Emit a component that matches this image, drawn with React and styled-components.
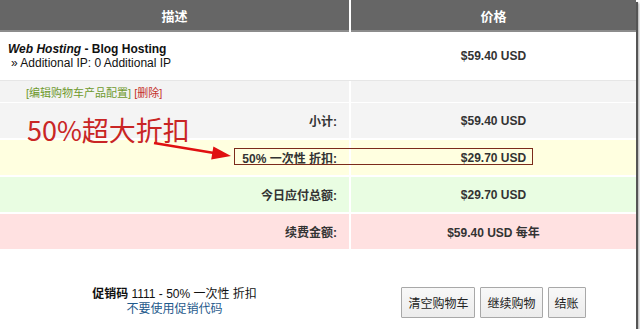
import React from "react";
import styled, { createGlobalStyle } from "styled-components";

const GlobalStyle = createGlobalStyle`
  body {
    margin: 0;
    background: #fff;
    font-family: "Liberation Sans", "Noto Sans CJK SC", sans-serif;
    color: #333;
  }
`;

// 截图外框, 右下有阴影
const Frame = styled.div`
  position: relative;
  width: 636px;
  height: 329px;
  background: #fff;
  box-shadow: 2px 2px 0 #555, 3px 3px 2px rgba(0, 0, 0, 0.35);
  overflow: visible;
`;

const Table = styled.div`
  display: flex;
  flex-direction: column;
`;

const Row = styled.div`
  display: grid;
  grid-template-columns: 349px 1fr;
  column-gap: 2px;
  height: ${(p) => p.$h}px;
  margin-top: ${(p) => p.$mt || 0}px;
  border-bottom: ${(p) => (p.$line ? "1px solid #e6e6e6" : "none")};
`;

const HeadCell = styled.div`
  background: #666;
  border-bottom: 2px solid #8c8c8c;
  color: #fff;
  font-weight: bold;
  font-size: 13px;
  display: flex;
  align-items: center;
  justify-content: center;
`;

const Cell = styled.div`
  background: ${(p) => p.$bg || "#fff"};
  display: flex;
  align-items: center;
  justify-content: ${(p) => p.$align || "center"};
  padding: ${(p) => p.$pad || "0"};
  font-size: 12px;
  font-weight: ${(p) => (p.$bold ? "bold" : "normal")};
  color: #333;
`;

const Product = styled.div`
  display: flex;
  flex-direction: column;
  line-height: 14px;
  color: #111;
`;

const ProductName = styled.div`
  font-weight: bold;
  em {
    font-style: italic;
  }
`;

const Addon = styled.div`
  padding-left: 3px;
`;

const EditLink = styled.span`
  font-size: 11px;
  color: ${(p) => p.$color};
  margin-right: 3px;
`;

const Footer = styled.div`
  display: grid;
  grid-template-columns: 349px 1fr;
  column-gap: 2px;
  padding-top: 38px;
`;

const Promo = styled.div`
  display: flex;
  flex-direction: column;
  align-items: center;
  font-size: 12px;
  line-height: 15px;
  color: #111;
  b {
    font-weight: bold;
  }
`;

const PromoLink = styled.a`
  color: #1f5a8c;
  text-decoration: none;
`;

const Buttons = styled.div`
  display: flex;
  justify-content: center;
  gap: 5px;
`;

const Button = styled.button`
  height: 31px;
  padding: 0 6px;
  font-family: "Noto Sans CJK SC", sans-serif;
  font-size: 12px;
  color: #222;
  background: linear-gradient(#f8f8f8, #ececec);
  border: 1px solid #a8a8a8;
  border-radius: 1px;
`;

// 标注层
const Note = styled.div`
  position: absolute;
  left: 27px;
  top: 116px;
  font-family: "Noto Sans CJK SC", sans-serif;
  font-size: 27px;
  line-height: 27px;
  color: #c92525;
  white-space: nowrap;
`;

const Highlight = styled.div`
  position: absolute;
  left: 234px;
  top: 148px;
  width: 297px;
  height: 15px;
  border: 1.5px solid #7b2b1b;
`;

const Arrow = styled.svg`
  position: absolute;
  left: 0;
  top: 0;
  pointer-events: none;
`;

const SummaryRow = ({ bg, label, value, mt }) => (
  <Row $h={35} $mt={mt}>
    <Cell $bg={bg} $align="flex-end" $pad="0 12px 0 0" $bold>
      {label}
    </Cell>
    <Cell $bg={bg} $bold>
      {value}
    </Cell>
  </Row>
);

const App = () => {
  return (
    <>
      <GlobalStyle />
      <Frame>
        <Table>
          <Row $h={32}>
            <HeadCell>描述</HeadCell>
            <HeadCell>价格</HeadCell>
          </Row>
          <Row $h={48} $line>
            <Cell $align="flex-start" $pad="0 0 0 8px">
              <Product>
                <ProductName>
                  <em>Web Hosting</em> - Blog Hosting
                </ProductName>
                <Addon>» Additional IP: 0 Additional IP</Addon>
              </Product>
            </Cell>
            <Cell $bold>$59.40 USD</Cell>
          </Row>
          <Row $h={21}>
            <Cell $bg="#f3f3f3" $align="flex-start" $pad="0 0 0 26px">
              <EditLink $color="#6f9a2e">[编辑购物车产品配置]</EditLink>
              <EditLink $color="#c4302b">[删除]</EditLink>
            </Cell>
            <Cell $bg="#f3f3f3" />
          </Row>
          <SummaryRow mt={1} bg="#f4f4f4" label="小计:" value="$59.40 USD" />
          <SummaryRow mt={2} bg="#ffffe0" label="50% 一次性 折扣:" value="$29.70 USD" />
          <SummaryRow mt={2} bg="#e9fde2" label="今日应付总额:" value="$29.70 USD" />
          <SummaryRow mt={2} bg="#ffe1e1" label="续费金额:" value="$59.40 USD 每年" />
        </Table>
        <Footer>
          <Promo>
            <div>
              <b>促销码</b> 1111 - 50% 一次性 折扣
            </div>
            <PromoLink href="#">不要使用促销代码</PromoLink>
          </Promo>
          <Buttons>
            <Button>清空购物车</Button>
            <Button>继续购物</Button>
            <Button>结账</Button>
          </Buttons>
        </Footer>

        <Note>50%超大折扣</Note>
        <Highlight />
        <Arrow width="640" height="333" viewBox="0 0 640 333">
          <line x1="154" y1="143" x2="214" y2="153" stroke="#e01010" strokeWidth="2.5" />
          <polygon points="231,156 213.4,146.6 211.2,159.4" fill="#e01010" />
        </Arrow>
      </Frame>
    </>
  );
};

export default App;
